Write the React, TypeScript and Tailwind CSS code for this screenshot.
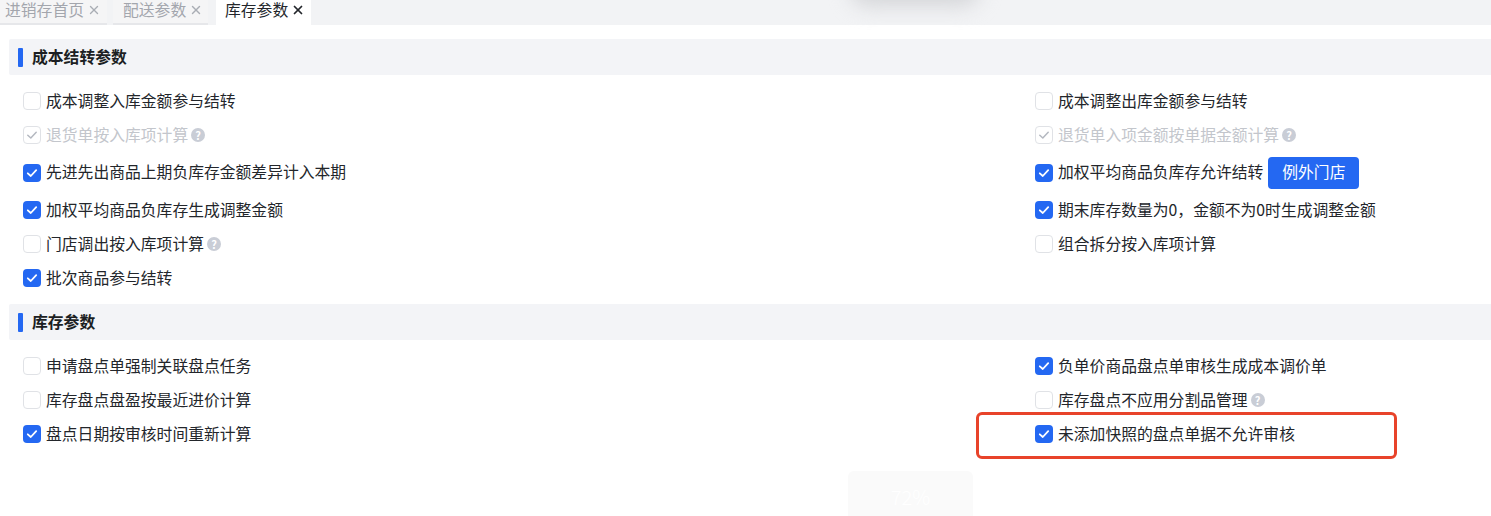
import React from 'react';
import { X } from 'lucide-react';

type RowItem = {
  label: string;
  state?: 'off' | 'on' | 'disabled';
  help?: boolean;
  action?: string;
  highlight?: boolean;
};

const costRows: RowItem[] = [
  { label: '成本调整入库金额参与结转' },
  { label: '成本调整出库金额参与结转' },
  { label: '退货单按入库项计算', state: 'disabled', help: true },
  { label: '退货单入项金额按单据金额计算', state: 'disabled', help: true },
  { label: '先进先出商品上期负库存金额差异计入本期', state: 'on' },
  { label: '加权平均商品负库存允许结转', state: 'on', action: '例外门店' },
  { label: '加权平均商品负库存生成调整金额', state: 'on' },
  { label: '期末库存数量为0，金额不为0时生成调整金额', state: 'on' },
  { label: '门店调出按入库项计算', help: true },
  { label: '组合拆分按入库项计算' },
  { label: '批次商品参与结转', state: 'on' },
];

const stockRows: RowItem[] = [
  { label: '申请盘点单强制关联盘点任务' },
  { label: '负单价商品盘点单审核生成成本调价单', state: 'on' },
  { label: '库存盘点盘盈按最近进价计算' },
  { label: '库存盘点不应用分割品管理', help: true },
  { label: '盘点日期按审核时间重新计算', state: 'on' },
  { label: '未添加快照的盘点单据不允许审核', state: 'on', highlight: true },
];

function Check({ state = 'off' }: { state?: RowItem['state'] }) {
  if (state === 'on') {
    return (
      <span className="flex h-[18px] w-[18px] shrink-0 items-center justify-center rounded-[4px] bg-[#2468f2]">
        <svg width="12" height="12" viewBox="0 0 12 12" fill="none">
          <path d="M1.8 6.3 L4.8 9 L10.2 3.2" stroke="#fff" strokeWidth="1.8" strokeLinecap="round" strokeLinejoin="round" />
        </svg>
      </span>
    );
  }
  if (state === 'disabled') {
    return (
      <span className="flex h-[18px] w-[18px] shrink-0 items-center justify-center rounded-[4px] border-[1.5px] border-[#e0e2e6] bg-white">
        <svg width="12" height="12" viewBox="0 0 12 12" fill="none">
          <path d="M1.8 6.3 L4.8 9 L10.2 3.2" stroke="#b4b8c0" strokeWidth="1.5" strokeLinecap="round" strokeLinejoin="round" />
        </svg>
      </span>
    );
  }
  return <span className="h-[18px] w-[18px] shrink-0 rounded-[4px] border-[1.5px] border-[#e0e2e6] bg-white" />;
}

function Help() {
  return (
    <span className="ml-[3px] flex h-[14px] w-[14px] shrink-0 items-center justify-center rounded-full bg-[#c9cdd6] text-[11px] leading-none font-bold text-white">
      ?
    </span>
  );
}

function Row({ item }: { item: RowItem }) {
  const disabled = item.state === 'disabled';
  return (
    <div className={`relative flex items-center ${item.action ? 'min-h-[41px]' : 'min-h-[34px]'}`}>
      <Check state={item.state} />
      <span className={`ml-[5px] pb-[1px] text-[15.8px] leading-none whitespace-nowrap ${disabled ? 'text-[#c3c6cc]' : 'text-[#23262b]'}`}>
        {item.label}
      </span>
      {item.help && <Help />}
      {item.action && (
        <button className="ml-[5px] h-[32px] w-[91px] rounded-[4px] bg-[#2468f2] pb-[1px] text-[15.8px] text-white">{item.action}</button>
      )}
      {item.highlight && (
        <div className="absolute top-[-5px] bottom-[-8px] left-[-59px] w-[421px] rounded-[6px] border-[3px] border-[#e8432a]" />
      )}
    </div>
  );
}

function Section({ title, rows }: { title: string; rows: RowItem[] }) {
  return (
    <section>
      <div className="ml-[9px] flex h-[36px] items-center rounded-l-[2px] bg-[#f3f4f7] pl-[9px]">
        <span className="h-[19px] w-[5px] rounded-[1px] bg-[#2468f2]" />
        <h2 className="ml-[9px] pb-[1px] text-[15.8px] leading-none font-bold text-[#1c1f23]">{title}</h2>
      </div>
      <div className="grid grid-cols-[1012px_1fr] py-[9px] pl-[23px]">
        {rows.map((item) => (
          <Row key={item.label} item={item} />
        ))}
      </div>
    </section>
  );
}

function Tab({ label, active, className }: { label: string; active?: boolean; className: string }) {
  return (
    <div
      className={`flex h-[25px] items-center ${className} ${
        active ? 'bg-white pb-[6px] text-[#23262b]' : 'border-b-2 border-[#e6e7ea] bg-[#f5f5f6] pb-[4px] text-[#a3a6ad]'
      }`}
    >
      <span className="text-[15.8px] leading-none whitespace-nowrap">{label}</span>
      <X
        size={14}
        strokeWidth={active ? 3 : 2.4}
        className={`ml-[3px] shrink-0 ${active ? 'text-[#23262b]' : 'text-[#a9adb4]'}`}
      />
    </div>
  );
}

export default function App() {
  return (
    <div className="relative h-[516px] w-[1491px] overflow-hidden bg-white font-['Noto_Sans_CJK_SC','Noto_Sans',sans-serif]">
      <div className="flex h-[25px] bg-[#f2f3f5]">
        <Tab label="进销存首页" className="w-[107px] pl-[5px]" />
        <Tab label="配送参数" className="ml-[6px] w-[95px] pl-[10px]" />
        <Tab label="库存参数" active className="ml-[8px] w-[95px] pl-[9px]" />
      </div>
      <div className="h-[14px]" />
      <Section title="成本结转参数" rows={costRows} />
      <Section title="库存参数" rows={stockRows} />

      {/* 页面上叠加的加载提示残影 */}
      <div className="absolute top-[-30px] left-[850px] h-[36px] w-[130px] rounded-full bg-[#d4d5d8] blur-[10px]" />
      <div className="absolute top-[471px] left-[848px] flex h-[60px] w-[125px] justify-center rounded-[6px] bg-[#fafafa] pt-[12px] text-[20px] leading-[28px] font-light text-white">
        72%
      </div>
    </div>
  );
}
